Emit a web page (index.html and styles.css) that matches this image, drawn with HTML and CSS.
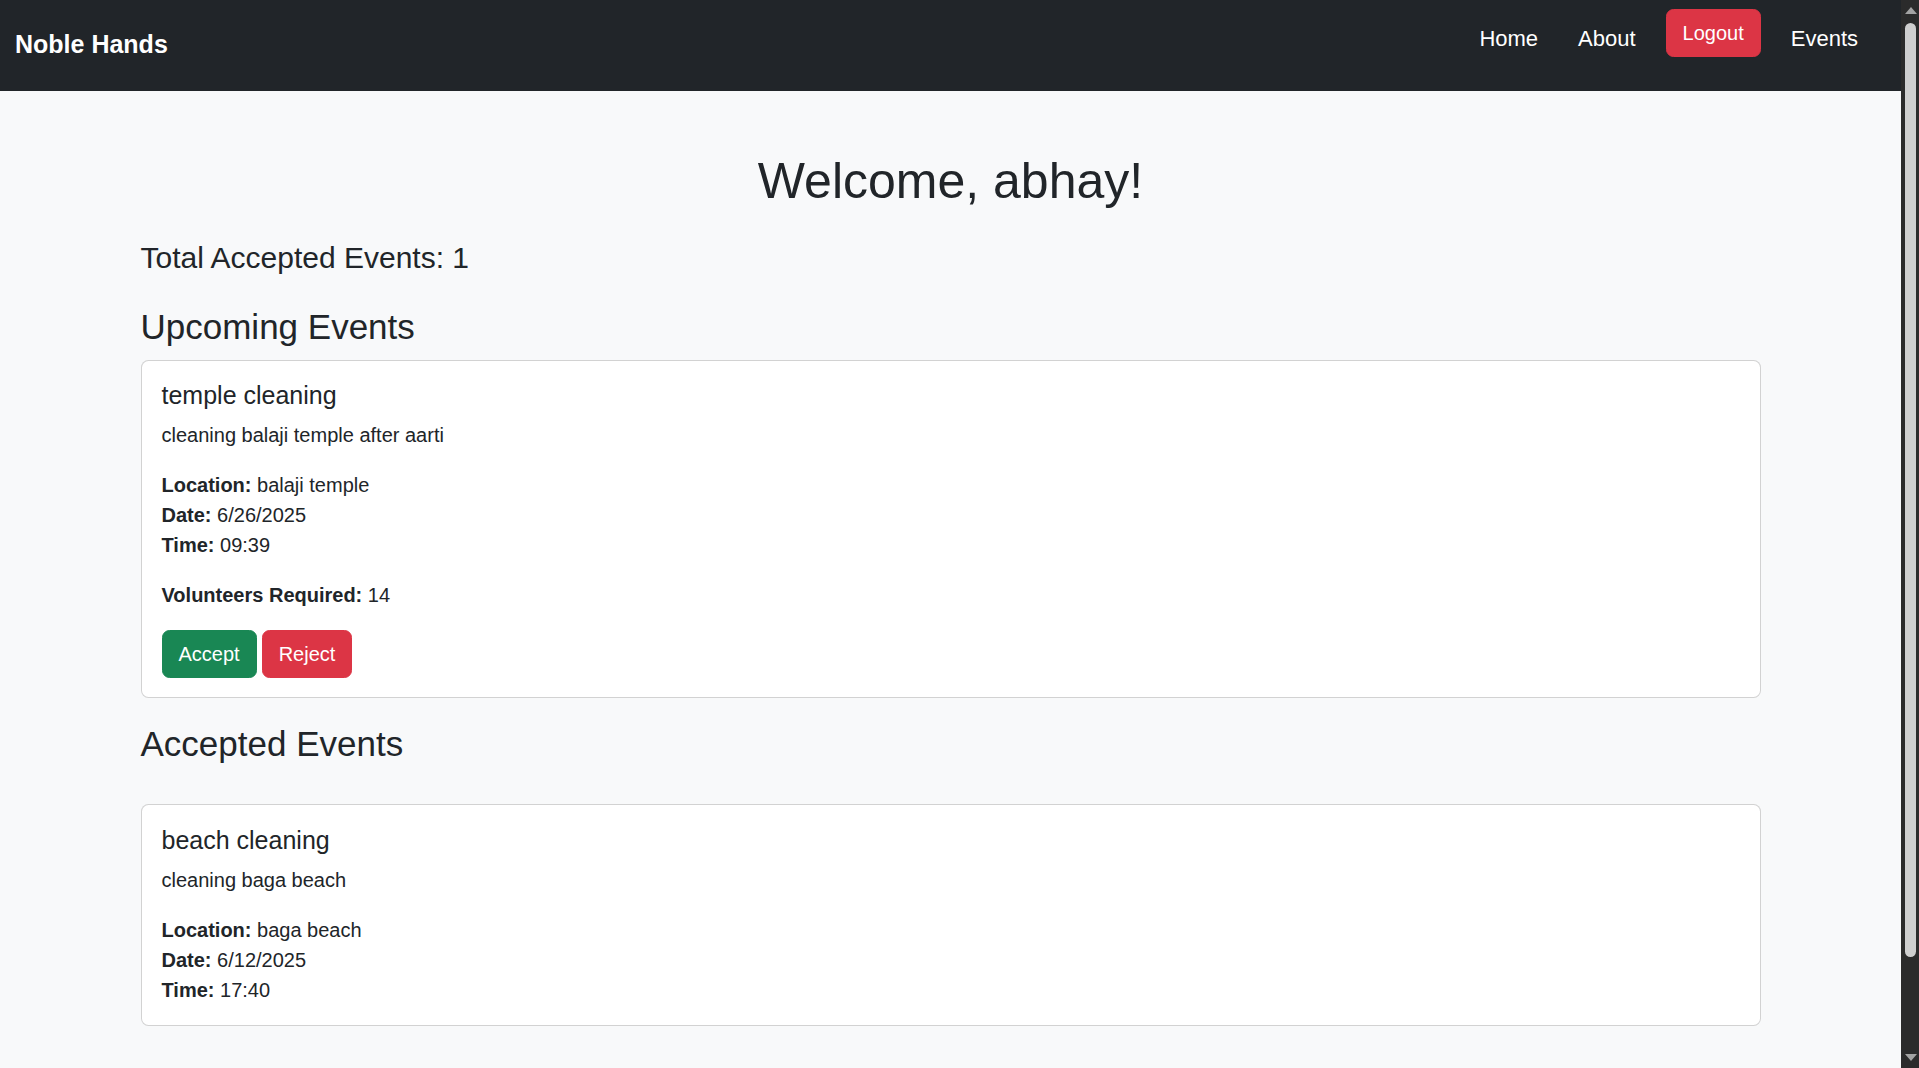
FILE: index.html
```html
<!DOCTYPE html>
<html lang="en">
<head>
<meta charset="utf-8">
<title>Noble Hands</title>
<link rel="stylesheet" href="styles.css">
</head>
<body>
<nav class="navbar">
  <a class="brand" href="#">Noble Hands</a>
  <ul class="nav">
    <li class="nav-item"><a class="nav-link" href="#">Home</a></li>
    <li class="nav-item"><a class="nav-link" href="#">About</a></li>
    <li class="nav-item"><button class="btn btn-danger" type="button">Logout</button></li>
    <li class="nav-item"><a class="nav-link" href="#">Events</a></li>
  </ul>
</nav>

<main class="container">
  <h1 class="welcome">Welcome, abhay!</h1>
  <h4 class="total">Total Accepted Events: 1</h4>

  <h3 class="section-title">Upcoming Events</h3>
  <div class="card">
    <h5 class="card-title">temple cleaning</h5>
    <p class="card-text">cleaning balaji temple after aarti</p>
    <p class="card-text"><strong>Location:</strong> balaji temple<br><strong>Date:</strong> 6/26/2025<br><strong>Time:</strong> 09:39</p>
    <p class="card-text"><strong>Volunteers Required:</strong> 14</p>
    <div class="actions">
      <button class="btn btn-success" type="button">Accept</button>
      <button class="btn btn-danger" type="button">Reject</button>
    </div>
  </div>

  <h3 class="section-title accepted">Accepted Events</h3>
  <div class="card card-accepted">
    <h5 class="card-title">beach cleaning</h5>
    <p class="card-text">cleaning baga beach</p>
    <p class="card-text"><strong>Location:</strong> baga beach<br><strong>Date:</strong> 6/12/2025<br><strong>Time:</strong> 17:40</p>
  </div>
</main>

<div class="scrollbar" aria-hidden="true">
  <span class="arrow arrow-up"></span>
  <span class="thumb"></span>
  <span class="arrow arrow-down"></span>
</div>
</body>
</html>
```

FILE: styles.css
```css
* {
  box-sizing: border-box;
}

html {
  background: #f8f9fa;
}

body {
  margin: 0 18px 0 0;
  background: #f8f9fa;
  color: #212529;
  font-family: "Liberation Sans", Arial, sans-serif;
  font-size: 20px;
  line-height: 30px;
}

/* ---------- fake window scrollbar (overlay) ---------- */
.scrollbar {
  position: fixed;
  top: 0;
  right: 0;
  width: 18px;
  height: 100vh;
  background: #2b2b2b;
}

.thumb {
  position: absolute;
  top: 23px;
  left: 4px;
  width: 11px;
  height: 934px;
  background: #cfcfcf;
  border-radius: 6px;
}

.arrow {
  position: absolute;
  left: 4px;
  width: 0;
  height: 0;
  border-left: 6px solid transparent;
  border-right: 6px solid transparent;
}

.arrow-up {
  top: 7px;
  border-bottom: 7px solid #a3a3a3;
}

.arrow-down {
  bottom: 7px;
  border-top: 7px solid #a3a3a3;
}

/* ---------- navbar ---------- */
.navbar {
  display: flex;
  align-items: flex-start;
  justify-content: space-between;
  height: 91px;
  padding: 0 15px;
  background: #212529;
}

.brand {
  margin-top: 26px;
  color: #fff;
  font-size: 25px;
  font-weight: 700;
  line-height: 37.5px;
  text-decoration: none;
}

.nav {
  display: flex;
  align-items: flex-start;
  list-style: none;
  margin: 9px 8px 0 0;
  padding: 0;
}

.nav-item {
  margin: 0 10px;
}

.nav-link {
  display: block;
  padding: 12.5px 10px 0;
  color: #fff;
  font-size: 22px;
  line-height: 33px;
  text-decoration: none;
}

/* ---------- buttons ---------- */
.btn {
  display: inline-block;
  height: 47.5px;
  padding: 0 16px;
  border: 1px solid transparent;
  border-radius: 7.5px;
  color: #fff;
  font-family: inherit;
  font-size: 20px;
  line-height: 30px;
  cursor: pointer;
}

.btn-danger {
  background: #dc3545;
  border-color: #dc3545;
}

.btn-success {
  background: #198754;
  border-color: #198754;
}

/* ---------- content ---------- */
.container {
  max-width: 1620px;
  margin: 0 auto;
  padding-bottom: 158px;
}

.welcome {
  margin: 60px 0 29px;
  font-size: 50px;
  font-weight: 500;
  line-height: 60px;
  text-align: center;
}

.total {
  margin: 0 0 30px;
  font-size: 30px;
  font-weight: 500;
  line-height: 36px;
}

.section-title {
  margin: 0 0 12px;
  font-size: 35px;
  font-weight: 500;
  line-height: 42px;
}

.section-title.accepted {
  margin-bottom: 39px;
}

.card {
  margin-bottom: 25px;
  padding: 19px 20px;
  background: #fff;
  border: 1px solid rgba(0, 0, 0, 0.175);
  border-radius: 7.5px;
}

.card-accepted {
  padding-top: 20px;
  padding-bottom: 20px;
}

.card-title {
  margin: 0 0 10px;
  font-size: 25px;
  font-weight: 500;
  line-height: 30px;
}

.card-text {
  margin: 0 0 20px;
}

.card-text:last-child {
  margin-bottom: 0;
}

.card-text strong {
  font-weight: 700;
}

.actions {
  display: flex;
  gap: 5px;
}
```
